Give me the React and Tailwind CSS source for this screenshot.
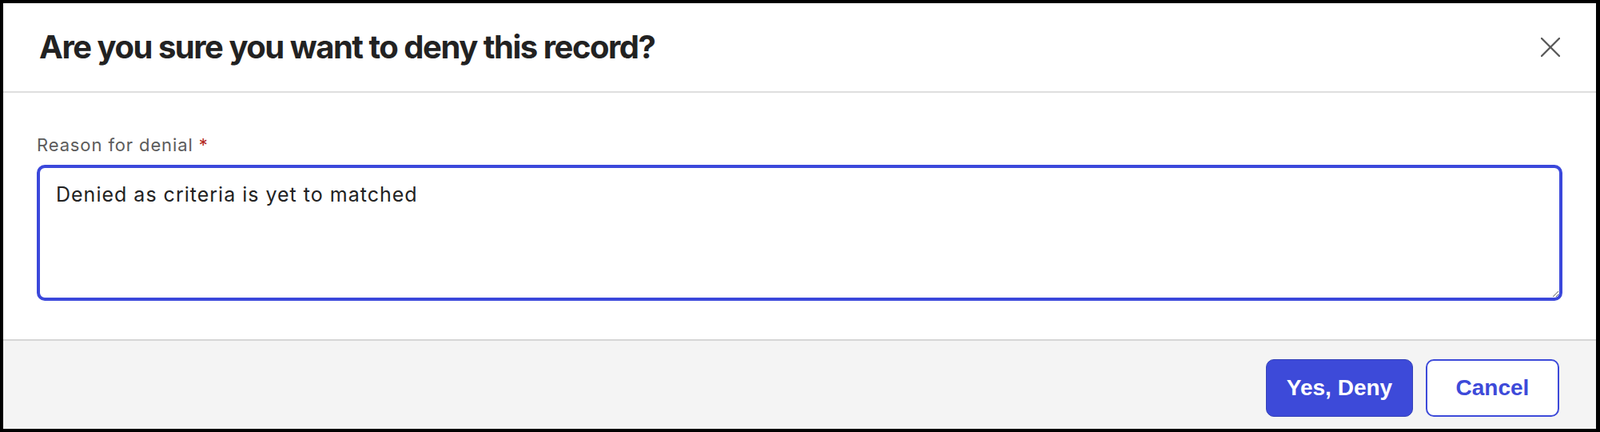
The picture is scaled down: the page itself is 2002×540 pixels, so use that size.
import React from 'react';

const DenyDialog = () => {
  return (
    <div className="w-[2002px] h-[540px] bg-black pl-[4px] pr-[5px] pt-[4px] pb-[4px]">
      <div className="h-full bg-white flex flex-col">
        {/* Header */}
        <div className="h-[112px] flex items-center justify-between pl-[45px] pr-[45px] border-b-2 border-[#dedede]">
          <h2 className="text-[40px] font-bold text-[#222] tracking-[-0.037em]" style={{ fontFamily: 'Inter, sans-serif' }}>
            Are you sure you want to deny this record?
          </h2>
          <button className="w-[24px] h-[24px] text-[#5a5a5a]">
            <svg width="24" height="24" viewBox="0 0 24 24" fill="none" stroke="currentColor" strokeWidth="2.4" strokeLinecap="round">
              <line x1="1" y1="1" x2="23" y2="23" />
              <line x1="23" y1="1" x2="1" y2="23" />
            </svg>
          </button>
        </div>

        {/* Body */}
        <div className="flex-1 px-[42px] pt-[51px] border-b-2 border-[#d6d6d6]" style={{ fontFamily: 'Inter, sans-serif' }}>
          <label className="block text-[22px] leading-[28px] tracking-[0.04em] text-[#5c5c5c]">
            Reason for denial <span className="text-[#b3261e]">*</span>
          </label>
          <textarea
            className="mt-[11px] block w-full h-[170px] border-4 border-[#3b48db] rounded-[10px] pl-[20px] pt-[15px] text-[25px] leading-[36px] tracking-[0.04em] text-[#222] outline-none"
            defaultValue="Denied as criteria is yet to matched"
          />
        </div>

        {/* Footer */}
        <div className="h-[110px] bg-[#f4f4f4] flex justify-end items-start gap-[16px] pt-[23px] pr-[46px]" style={{ fontFamily: '"Liberation Sans", Arial, sans-serif' }}>
          <button className="w-[184px] h-[72px] rounded-[10px] bg-[#3d4ad9] border-[1.5px] border-[#3341b8] text-white text-[28px] font-bold">
            Yes, Deny
          </button>
          <button className="w-[167px] h-[72px] rounded-[10px] bg-white border-2 border-[#3d4ad9] text-[#3d4ad9] text-[28px] font-bold">
            Cancel
          </button>
        </div>
      </div>
    </div>
  );
};

export default function App() {
  return <DenyDialog />;
}
